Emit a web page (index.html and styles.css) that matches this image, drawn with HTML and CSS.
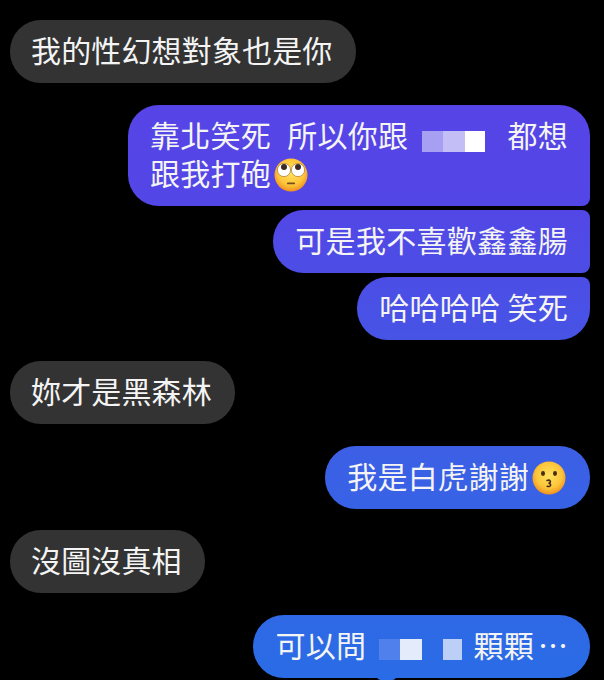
FILE: index.html
```html
<!DOCTYPE html>
<html lang="zh-Hant">
<head>
    <meta charset="UTF-8">
    <meta name="viewport" content="width=device-width, initial-scale=1.0">
    <title>Chat</title>
    <link rel="stylesheet" href="styles.css">
</head>
<body>

    <svg class="defs" width="0" height="0" aria-hidden="true">
        <defs>
            <radialGradient id="faceFill" cx="50%" cy="42%" r="60%">
                <stop offset="0" stop-color="#ffe25e"/>
                <stop offset="0.65" stop-color="#fdc53a"/>
                <stop offset="1" stop-color="#f08a1c"/>
            </radialGradient>
        </defs>
    </svg>

    <main class="chat">
        <div class="bubble them">我的性幻想對象也是你</div>

        <div class="group">
            <div class="bubble me first">靠北笑死  所以你跟<span class="censor censorWide"><i class="shade1"></i><i class="shade2"></i><i class="shade3"></i></span>都想<br>跟我打砲<svg class="emoji" viewBox="0 0 34 34"><circle cx="17" cy="17" r="16.5" fill="url(#faceFill)"/><circle cx="10" cy="12" r="6.6" fill="#fff" stroke="#a8772a" stroke-width="0.7"/><circle cx="24" cy="12" r="6.6" fill="#fff" stroke="#a8772a" stroke-width="0.7"/><circle cx="10" cy="9" r="3" fill="#3a2a20"/><circle cx="24" cy="9" r="3" fill="#3a2a20"/><rect x="13" y="24.5" width="8" height="1.8" rx="0.9" fill="#7a4a1c"/></svg></div>
            <div class="bubble me middle">可是我不喜歡鑫鑫腸</div>
            <div class="bubble me last">哈哈哈哈 笑死</div>
        </div>

        <div class="bubble them">妳才是黑森林</div>

        <div class="bubble me">我是白虎謝謝<svg class="emoji" viewBox="0 0 34 34"><circle cx="17" cy="17" r="16.5" fill="url(#faceFill)"/><ellipse cx="11" cy="12.5" rx="2" ry="2.4" fill="#4a2c14"/><ellipse cx="23" cy="12.5" rx="2" ry="2.4" fill="#4a2c14"/><path d="M15 19.5c3.2-1.2 5 1.8 1.6 2.8 3.6 0.8 2 4-1.4 3" fill="none" stroke="#4a2c14" stroke-width="1.6" stroke-linecap="round"/></svg></div>

        <div class="bubble them">沒圖沒真相</div>

        <div class="bubble me hasPeek">可以問<span class="censor censorSplit"><i class="shade4"></i><i class="shade5"></i><i class="gap"></i><i class="shade6"></i></span>顆顆<span class="more">⋯</span></div>
    </main>

</body>
</html>
```

FILE: styles.css
```css
* {
    box-sizing: border-box;
    margin: 0;
    padding: 0;
}

body {
    height: 680px;
    overflow: hidden;
    background: #000;
    color: #f4f4f4;
    font-family: "Noto Sans CJK TC", "Noto Sans", sans-serif;
    font-size: 30px;
}

.defs {
    position: absolute;
}

.chat {
    display: flex;
    flex-direction: column;
    gap: 21.5px;
    padding: 20px 14px 0 10px;
}

.group {
    display: flex;
    flex-direction: column;
    gap: 4px;
}

.bubble {
    width: fit-content;
    padding: 10px 22px 15px;
    border-radius: 31px;
    line-height: 38px;
    letter-spacing: 0.3px;
    white-space: pre;
}

.them {
    padding-left: 21px;
    padding-right: 23.5px;
    letter-spacing: 0.15px;
    background: #333;
}

/* gradient is fixed to the window so bubbles shift from purple to blue going down */
.me {
    align-self: flex-end;
    background: linear-gradient(180deg, #5a42e8 0, #5346e6 200px, #3c5fe5 450px, #2a6ce6 680px) fixed;
}

.first {
    word-spacing: 1px;
    border-bottom-right-radius: 8px;
}

.middle {
    border-top-right-radius: 8px;
    border-bottom-right-radius: 8px;
}

.last {
    border-top-right-radius: 8px;
}

/* negative margins keep the emoji from stretching the line */
.emoji {
    display: inline-block;
    width: 34px;
    height: 34px;
    margin: -8px 2px -8px 3px;
    vertical-align: 1px;
}

/* the top edge of the next bubble just shows at the bottom of the window */
.hasPeek {
    position: relative;
}

.hasPeek::after {
    content: "";
    position: absolute;
    left: 124px;
    bottom: -2px;
    width: 19px;
    height: 4px;
    border-radius: 0 0 9px 9px;
    background: #2a6ce6;
}

/* pixelated blocks hiding a name */
.censor {
    display: inline-flex;
    height: 21px;
}

.censor i {
    display: block;
    height: 100%;
}

.censorWide {
    width: 99px;
    padding: 0 21px 0 14px;
    vertical-align: -5.5px;
}

.censorSplit {
    width: 107px;
    padding: 0 11px 0 13px;
    vertical-align: -3px;
}

.shade1 {
    width: 21px;
    background: #a79ff1;
}

.shade2 {
    width: 22px;
    background: #c4bef6;
}

.shade3 {
    width: 20px;
    background: #fff;
}

.shade4 {
    width: 21px;
    background: #4f80ec;
}

.shade5 {
    width: 22px;
    background: #e4ecfb;
}

.gap {
    width: 21px;
}

.shade6 {
    width: 19px;
    background: #bccff6;
}

.more {
    margin-left: 4px;
    letter-spacing: 0;
}
```
